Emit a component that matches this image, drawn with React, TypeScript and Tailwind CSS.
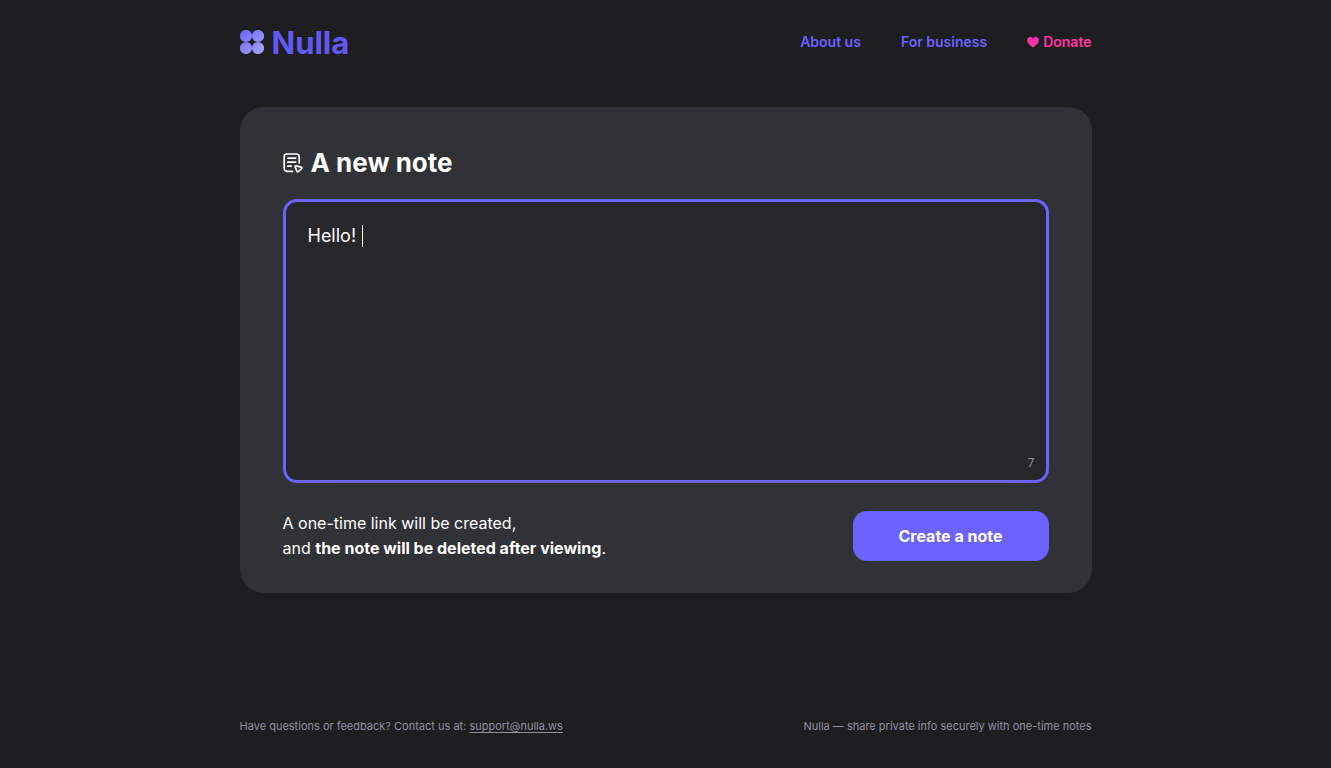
import { useState } from "react";

function Logo() {
  return (
    <a href="#home" className="flex items-center gap-2 text-[#6259f5]">
      <svg viewBox="0 0 24 24" className="size-6" aria-hidden="true">
        <defs>
          <linearGradient id="petals" x1="0" y1="0" x2="24" y2="24" gradientUnits="userSpaceOnUse">
            <stop offset="0" stopColor="#6c63ff" />
            <stop offset="1" stopColor="#a5a8ff" />
          </linearGradient>
        </defs>
        <g fill="url(#petals)">
          <circle cx="6" cy="6" r="6.1" />
          <circle cx="18" cy="6" r="6.1" />
          <circle cx="6" cy="18" r="6.1" />
          <circle cx="18" cy="18" r="6.1" />
        </g>
      </svg>
      <span className="pt-0.5 text-[31px] leading-[38px] font-bold">Nulla</span>
    </a>
  );
}

function NoteIcon() {
  return (
    <svg
      viewBox="0 0 20 20"
      className="size-5"
      fill="none"
      stroke="currentColor"
      strokeWidth="1.7"
      strokeLinecap="round"
      strokeLinejoin="round"
      aria-hidden="true"
    >
      <path d="M9.500 18.300H4a2.800 2.800 0 0 1-2.800-2.800v-12A2.500 2.500 0 0 1 3.700 1h10a2.500 2.500 0 0 1 2.500 2.500V10" />
      <path d="M4.800 5.200h7.800M4.800 9.200h7.800M4.800 13.200h3.400" />
      <path d="M13.200 12.900l5 1.200c.8.2.9 1 .4 1.500l-3.100 2.900c-.6.5-1.300.3-1.600-.4l-1.700-4.100c-.3-.7.2-1.300 1-1.100z" />
    </svg>
  );
}

export default function App() {
  const [note, setNote] = useState("Hello! ");
  return (
    <div className="flex min-h-screen flex-col bg-[#1e1e20] font-['Inter','Liberation_Sans',sans-serif] text-white">
      <div className="mx-auto flex w-full max-w-[852px] grow flex-col">
        <header className="flex items-center justify-between pt-[22px] pb-[45px]">
          <Logo />
          <nav className="flex items-center gap-10 text-sm font-semibold text-[#6c63ff]">
            <a href="#about">About us</a>
            <a href="#business">For business</a>
            <a href="#donate" className="flex items-center gap-1 text-[#ff35a8]">
              <svg viewBox="0 0 12 12" className="size-3" fill="currentColor" aria-hidden="true">
                <path d="M6 11.4C3.3 9.4.2 7 .2 4.2.2 2.200 1.600 1 3.200 1 4.400 1 5.400 1.600 6 2.600 6.600 1.600 7.600 1 8.800 1c1.600 0 3 1.200 3 3.200C11.800 7 8.700 9.400 6 11.400z" />
              </svg>
              Donate
            </a>
          </nav>
        </header>

        <main className="rounded-3xl bg-[#313237] px-[43px] pt-9 pb-8">
          <h1 className="text-[26px] leading-10 font-bold">
            <label htmlFor="note" className="flex items-center gap-2">
              <NoteIcon />
              A new note
            </label>
          </h1>
          <div className="relative mt-4">
            <textarea
              id="note"
              value={note}
              onChange={(event) => setNote(event.target.value)}
              className="block h-[284px] w-full resize-none rounded-[14px] border-3 border-[#6c63ff] bg-[#27262b] px-[22px] py-5 text-lg leading-7 caret-transparent outline-none"
            />
            <div
              aria-hidden="true"
              className="pointer-events-none absolute top-[26px] left-[79px] h-[22px] w-px bg-white"
            />
            <output
              htmlFor="note"
              className="absolute right-3.5 bottom-3 text-xs leading-4 text-[#908fa3]"
            >
              {note.length}
            </output>
          </div>
          <div className="mt-7 flex items-center justify-between">
            <p className="text-base leading-[25px]">
              A one-time link will be created,
              <br />
              and <strong className="font-bold">the note will be deleted after viewing</strong>.
            </p>
            <button
              type="button"
              className="h-[50px] w-[196px] rounded-[14px] bg-[#6c63ff] text-base font-bold"
            >
              Create a note
            </button>
          </div>
        </main>

        <footer className="mt-auto flex justify-between pb-8 text-[11px] leading-5 text-[#908fa3]">
          <p>
            Have questions or feedback? Contact us at:{" "}
            <a href="mailto:support@nulla.ws" className="underline underline-offset-2">
              support@nulla.ws
            </a>
          </p>
          <p>Nulla — share private info securely with one-time notes</p>
        </footer>
      </div>
    </div>
  );
}
